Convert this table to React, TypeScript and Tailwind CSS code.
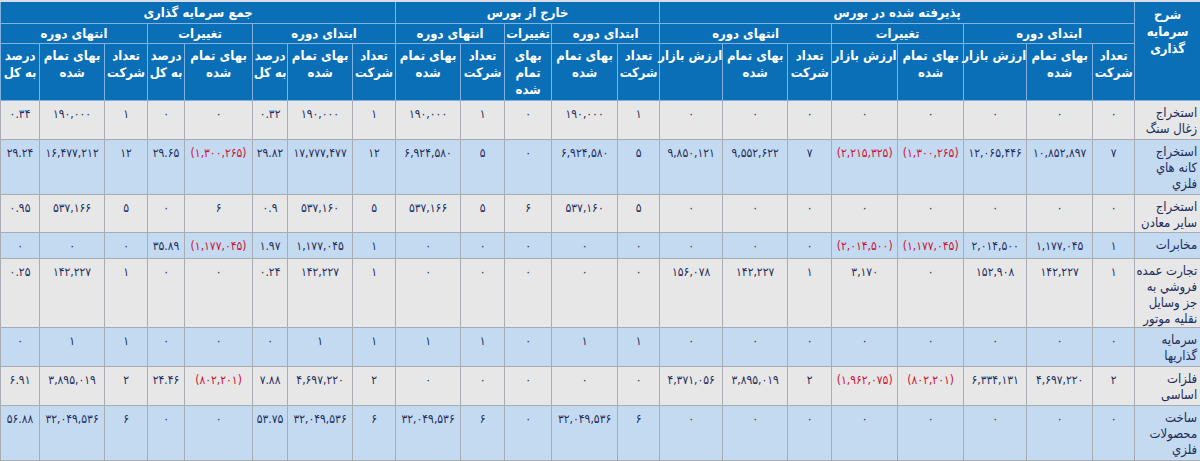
import React from 'react';

type Cell = string | { v: string; neg: true };

interface Row {
  label: string[];
  values: Cell[];
}

const colWidths = [66, 42, 66, 63, 66, 66, 44, 65, 63, 42, 66, 47, 44, 65, 43, 65, 35, 68, 37, 43, 65, 39];

const COUNT = ['تعداد', 'شرکت'];
const COST = ['بهای تمام', 'شده'];
const MARKET = ['ارزش بازار'];
const PCT = ['درصد', 'به کل'];

// third header row, right to left
const subHeaders: string[][] = [
  COUNT, COST, MARKET,
  COST, MARKET,
  COUNT, COST, MARKET,
  COUNT, COST,
  ['بهای', 'تمام', 'شده'],
  COUNT, COST,
  COUNT, COST, PCT,
  COST, PCT,
  COUNT, COST, PCT,
];

const n = (v: string): Cell => ({ v, neg: true });

const rows: Row[] = [
  {
    label: ['استخراج', 'زغال سنگ'],
    values: ['۰', '۰', '۰', '۰', '۰', '۰', '۰', '۰', '۱', '۱۹۰,۰۰۰', '۰', '۱', '۱۹۰,۰۰۰', '۱', '۱۹۰,۰۰۰', '۰.۳۲', '۰', '۰', '۱', '۱۹۰,۰۰۰', '۰.۳۴'],
  },
  {
    label: ['استخراج', 'کانه هاي', 'فلزي'],
    values: ['۷', '۱۰,۸۵۲,۸۹۷', '۱۲,۰۶۵,۴۴۶', n('(۱,۳۰۰,۲۶۵)'), n('(۲,۲۱۵,۳۲۵)'), '۷', '۹,۵۵۲,۶۲۲', '۹,۸۵۰,۱۲۱', '۵', '۶,۹۲۴,۵۸۰', '۰', '۵', '۶,۹۲۴,۵۸۰', '۱۲', '۱۷,۷۷۷,۴۷۷', '۲۹.۸۲', n('(۱,۳۰۰,۲۶۵)'), '۲۹.۶۵', '۱۲', '۱۶,۴۷۷,۲۱۲', '۲۹.۲۴'],
  },
  {
    label: ['استخراج', 'سایر معادن'],
    values: ['۰', '۰', '۰', '۰', '۰', '۰', '۰', '۰', '۵', '۵۳۷,۱۶۰', '۶', '۵', '۵۳۷,۱۶۶', '۵', '۵۳۷,۱۶۰', '۰.۹', '۶', '۰', '۵', '۵۳۷,۱۶۶', '۰.۹۵'],
  },
  {
    label: ['مخابرات'],
    values: ['۱', '۱,۱۷۷,۰۴۵', '۲,۰۱۴,۵۰۰', n('(۱,۱۷۷,۰۴۵)'), n('(۲,۰۱۴,۵۰۰)'), '۰', '۰', '۰', '۰', '۰', '۰', '۰', '۰', '۱', '۱,۱۷۷,۰۴۵', '۱.۹۷', n('(۱,۱۷۷,۰۴۵)'), '۳۵.۸۹', '۰', '۰', '۰'],
  },
  {
    label: ['تجارت عمده', 'فروشي به', 'جز وسایل', 'نقلیه موتور'],
    values: ['۱', '۱۴۲,۲۲۷', '۱۵۲,۹۰۸', '۰', '۳,۱۷۰', '۱', '۱۴۲,۲۲۷', '۱۵۶,۰۷۸', '۰', '۰', '۰', '۰', '۰', '۱', '۱۴۲,۲۲۷', '۰.۲۴', '۰', '۰', '۱', '۱۴۲,۲۲۷', '۰.۲۵'],
  },
  {
    label: ['سرمایه', 'گذاریها'],
    values: ['۰', '۰', '۰', '۰', '۰', '۰', '۰', '۰', '۱', '۱', '۰', '۱', '۱', '۱', '۱', '۰', '۰', '۰', '۱', '۱', '۰'],
  },
  {
    label: ['فلزات', 'اساسی'],
    values: ['۲', '۴,۶۹۷,۲۲۰', '۶,۳۳۴,۱۳۱', n('(۸۰۲,۲۰۱)'), n('(۱,۹۶۲,۰۷۵)'), '۲', '۳,۸۹۵,۰۱۹', '۴,۳۷۱,۰۵۶', '۰', '۰', '۰', '۰', '۰', '۲', '۴,۶۹۷,۲۲۰', '۷.۸۸', n('(۸۰۲,۲۰۱)'), '۲۴.۴۶', '۲', '۳,۸۹۵,۰۱۹', '۶.۹۱'],
  },
  {
    label: ['ساخت', 'محصولات', 'فلزي'],
    values: ['۰', '۰', '۰', '۰', '۰', '۰', '۰', '۰', '۶', '۳۲,۰۴۹,۵۳۶', '۰', '۶', '۳۲,۰۴۹,۵۳۶', '۶', '۳۲,۰۴۹,۵۳۶', '۵۳.۷۵', '۰', '۰', '۶', '۳۲,۰۴۹,۵۳۶', '۵۶.۸۸'],
  },
];

const rowHeights = ['h-[39px]', 'h-[55px]', 'h-[38px]', 'h-[26px]', 'h-[68px]', 'h-[39px]', 'h-[39px]', 'h-[55px]'];

const th = 'border border-[#7fb2de] bg-[#0b6fb8] text-white font-bold text-[13px] leading-[17px] text-center whitespace-nowrap px-0';
const cellBase = 'border border-[#a8adb3] align-top pt-[4px] pb-0 leading-[16px] whitespace-nowrap';

function Lines({ lines }: { lines: string[] }) {
  return (
    <>
      {lines.map((l, i) => (
        <React.Fragment key={i}>
          {i > 0 && <br />}
          {l}
        </React.Fragment>
      ))}
    </>
  );
}

export default function App() {
  return (
    <div className="w-[1200px] h-[461px] overflow-hidden bg-white" style={{ fontFamily: '"DejaVu Sans Condensed", "DejaVu Sans", sans-serif' }}>
      <table dir="rtl" className="w-[1200px] table-fixed border-collapse border-t-2 border-t-[#d6dde6]">
        <colgroup>
          {colWidths.map((w, i) => (
            <col key={i} style={{ width: w }} />
          ))}
        </colgroup>
        <thead>
          <tr className="h-[22px]">
            <th rowSpan={3} className={`${th} align-top pt-1`}>
              <Lines lines={['شرح', 'سرمایه', 'گذاری']} />
            </th>
            <th colSpan={8} className={`${th} align-middle`}>پذیرفته شده در بورس</th>
            <th colSpan={5} className={`${th} align-middle`}>خارج از بورس</th>
            <th colSpan={8} className={`${th} align-middle`}>جمع سرمایه گذاری</th>
          </tr>
          <tr className="h-[20px]">
            <th colSpan={3} className={`${th} align-middle`}>ابتدای دوره</th>
            <th colSpan={2} className={`${th} align-middle`}>تغییرات</th>
            <th colSpan={3} className={`${th} align-middle`}>انتهای دوره</th>
            <th colSpan={2} className={`${th} align-middle`}>ابتدای دوره</th>
            <th className={`${th} align-middle`}>تغییرات</th>
            <th colSpan={2} className={`${th} align-middle`}>انتهای دوره</th>
            <th colSpan={3} className={`${th} align-middle`}>ابتدای دوره</th>
            <th colSpan={2} className={`${th} align-middle`}>تغییرات</th>
            <th colSpan={3} className={`${th} align-middle`}>انتهای دوره</th>
          </tr>
          <tr className="h-[57px]">
            {subHeaders.map((h, i) => (
              <th key={i} className={`${th} align-top pt-[3px] text-[12px]`}>
                <Lines lines={h} />
              </th>
            ))}
          </tr>
        </thead>
        <tbody className="text-[#1e2d5c]">
          {rows.map((row, r) => (
            <tr key={r} className={`${rowHeights[r]} ${r % 2 === 0 ? 'bg-[#e7e7e7]' : 'bg-[#c4daf1]'}`}>
              <td className={`${cellBase} text-right text-[13px] pr-[3px] pl-0`}>
                <Lines lines={row.label} />
              </td>
              {row.values.map((c, i) =>
                typeof c === 'string' ? (
                  <td key={i} className={`${cellBase} pt-[5px] text-center text-[12px] px-0.5`}>{c}</td>
                ) : (
                  <td key={i} className={`${cellBase} pt-[5px] text-center text-[12px] px-0.5 text-[#cc1133]`}>{c.v}</td>
                )
              )}
            </tr>
          ))}
        </tbody>
      </table>
    </div>
  );
}
